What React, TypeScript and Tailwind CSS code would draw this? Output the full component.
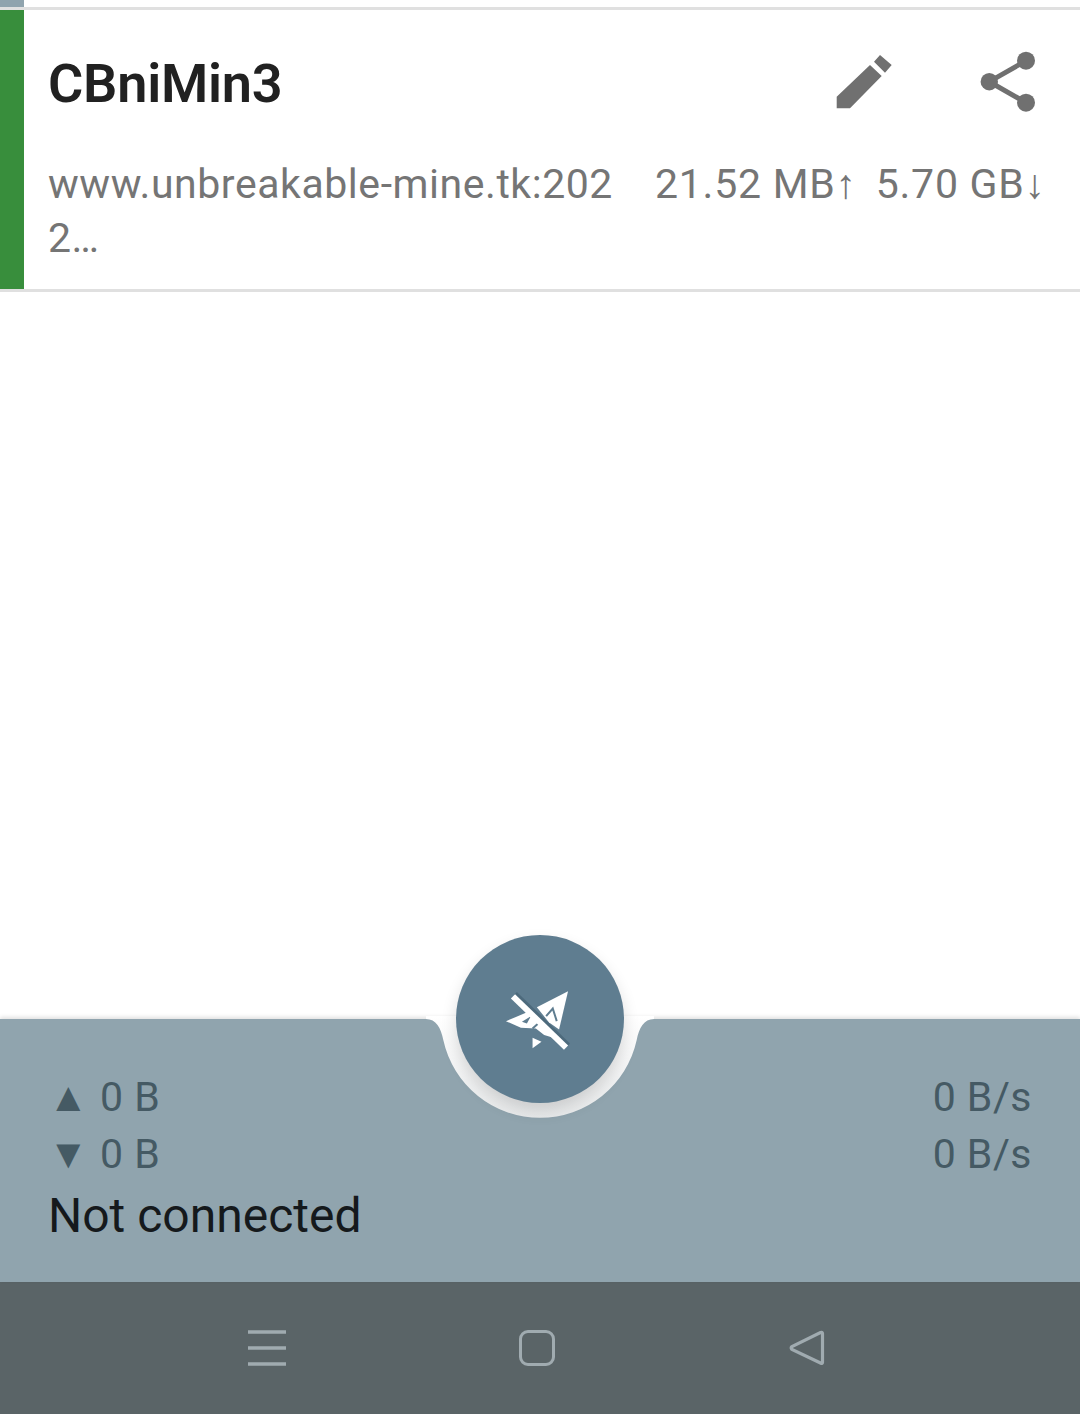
export default function App() {
  return (
    <div className="relative flex h-[1414px] w-[1080px] flex-col overflow-hidden bg-white font-['Roboto',sans-serif]">
      <div className="h-[7px] w-full bg-white">
        <div className="h-full w-6 bg-[#90a4ae]" />
      </div>
      <div className="h-[3px] bg-[#e0e0e0]" />
      <div className="flex h-[279px]">
        <div className="w-6 bg-[#388e3c]" />
        <div className="flex flex-1 flex-col pl-6">
          <div className="flex h-[144px] items-center">
            <div className="flex-1 pt-[3px] text-[54px] font-semibold tracking-[-0.2px] text-[#212121]">CBniMin3</div>
            <svg viewBox="824 42 80 80" className="h-20 w-20">
              <path d="M880 55L891.7 65L885 72.7L874 61.7Z M870 65L881.7 76L850 108.3H836.7V96.7Z" fill="#707070" />
            </svg>
            <svg viewBox="968 42 80 80" className="ml-16 mr-[32px] h-20 w-20">
              <path d="M1026 60.7L989.3 81.7L1026 102.7" fill="none" stroke="#707070" strokeWidth="5" />
              <circle cx="989.3" cy="81.7" r="8.7" fill="#707070" />
              <circle cx="1026" cy="60.7" r="9" fill="#707070" />
              <circle cx="1026" cy="102.7" r="9" fill="#707070" />
            </svg>
          </div>
          <div className="flex pt-[3px] text-[41px] leading-[54px] text-[#757575]">
            <div className="mr-[35px] w-[572px] break-all tracking-[0.55px]">www.unbreakable-mine.tk:2022…</div>
            <div className="whitespace-nowrap tracking-[0.75px]">21.52 MB↑</div>
            <div className="ml-[19px] whitespace-nowrap tracking-[0.75px]">5.70 GB↓</div>
          </div>
        </div>
      </div>
      <div className="h-[3px] bg-[#e0e0e0]" />
      <div className="flex-1" />
      <div className="relative flex h-[263px] justify-between bg-[#90a4ae] pl-12 pr-12 pt-[50px] shadow-[0_-2px_4px_rgba(0,0,0,0.12)]">
        <div className="text-[#455a64]">
          <div className="text-[41px] leading-[57px] tracking-[0.6px]">▲ 0 B</div>
          <div className="text-[41px] leading-[57px] tracking-[0.6px]">▼ 0 B</div>
          <div className="text-[48px] leading-[66px] text-[#15191c]">Not connected</div>
        </div>
        <div className="text-right text-[41px] leading-[57px] tracking-[0.5px] text-[#455a64]">
          <div>0 B/s</div>
          <div>0 B/s</div>
        </div>
        <svg viewBox="0 0 240 110" className="absolute left-[420px] top-[-3px] h-[110px] w-[240px]">
          <defs>
            <linearGradient id="notch" x1="0" y1="0" x2="0" y2="1">
              <stop offset="0" stopColor="#ffffff" />
              <stop offset="1" stopColor="#e9ebec" />
            </linearGradient>
          </defs>
          <path d="M6 3C16 3 21 12 23.3 24A99 99 0 0 0 216.7 24C219 12 224 3 234 3V0H6Z" fill="url(#notch)" />
        </svg>
        <div className="absolute left-[456px] top-[-84px] flex h-[168px] w-[168px] items-center justify-center rounded-full bg-[#5f7d90] shadow-[0_8px_16px_rgba(0,0,0,0.14)]">
          <svg viewBox="249 195 220 200" className="h-[67px] w-[73px]">
            <path d="M442 210L348 258L384 303L415 325Z" fill="#fff" />
            <path d="M376 285L396 262L408 300" fill="none" stroke="#5f7d90" strokeWidth="6" />
            <path d="M255 300L322 272L356 312L415 355L370 342L345 322L300 320Z" fill="#fff" />
            <path d="M303 302L330 285L318 307Z" fill="#5f7d90" />
            <path d="M335 322L352 307" stroke="#5f7d90" strokeWidth="6" />
            <path d="M335 350L362 362L335 382Z" fill="#fff" />
            <path d="M283 217L443 372" stroke="#4d6a7c" strokeWidth="14" />
            <path d="M276 225L436 380" stroke="#fff" strokeWidth="18" />
          </svg>
        </div>
      </div>
      <div className="flex h-[132px] items-center bg-[#5a6467] pl-[132px]">
        <div className="flex w-[270px] justify-center">
          <svg viewBox="0 0 38 36" className="h-9 w-[38px]">
            <path d="M0 2H38M0 18H38M0 34H38" stroke="#a0abb0" strokeWidth="3.4" />
          </svg>
        </div>
        <div className="flex w-[270px] justify-center">
          <div className="h-9 w-9 rounded-[9px] border-[3.5px] border-[#a0abb0]" />
        </div>
        <div className="flex w-[270px] justify-center">
          <svg viewBox="0 0 36 36" className="h-9 w-9">
            <path d="M33.5 3.5V32.5Q33.5 34 31.5 33L3 19.5Q1.5 18 3 16.5L31.5 2.5Q33.5 2 33.5 3.5Z" fill="none" stroke="#a0abb0" strokeWidth="3.2" />
          </svg>
        </div>
      </div>
    </div>
  );
}
